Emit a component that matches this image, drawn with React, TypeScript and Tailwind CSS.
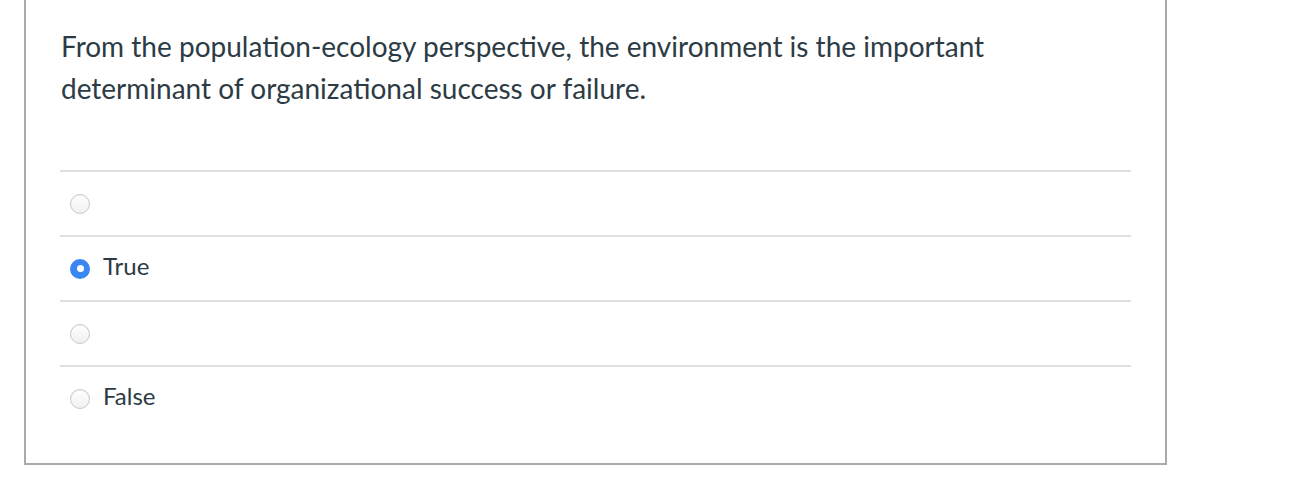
import React from 'react';

const ANSWERS = [
  { id: 'a1', label: '', checked: false },
  { id: 'a2', label: 'True', checked: true },
  { id: 'a3', label: '', checked: false },
  { id: 'a4', label: 'False', checked: false },
];

function Radio({ checked }: { checked: boolean }) {
  if (checked) {
    return (
      <span className="flex h-[20px] w-[20px] shrink-0 items-center justify-center rounded-full bg-[#3a87f4]">
        <span className="h-[7px] w-[7px] rounded-full bg-white" />
      </span>
    );
  }
  return (
    <span className="h-[20px] w-[20px] shrink-0 rounded-full border border-[#c8c8c8] bg-gradient-to-b from-white to-[#f1f1f1] shadow-[inset_0_1px_1px_rgba(0,0,0,0.06)]" />
  );
}

export default function App() {
  return (
    <div className="min-h-[492px] bg-white pl-[24px] font-['Lato','Noto_Sans',sans-serif] text-[#2d3b45]">
      <div className="w-[1143px] border-x-2 border-b-2 border-[#aaaaaa] pb-[33px]">
        <div className="px-[35px] pt-[25px] text-[28px] leading-[42px]">
          From the population-ecology perspective, the environment is the important
          <br />
          determinant of organizational success or failure.
        </div>

        <div className="mx-[34px] mt-[61px]">
          {ANSWERS.map((a) => (
            <label
              key={a.id}
              className="flex h-[65px] items-center gap-[13px] border-t-2 border-[#e0e0e0] pl-[10px]"
            >
              <Radio checked={a.checked} />
              <span className="-mt-[6px] text-[24px] leading-none">{a.label}</span>
            </label>
          ))}
        </div>
      </div>
    </div>
  );
}
